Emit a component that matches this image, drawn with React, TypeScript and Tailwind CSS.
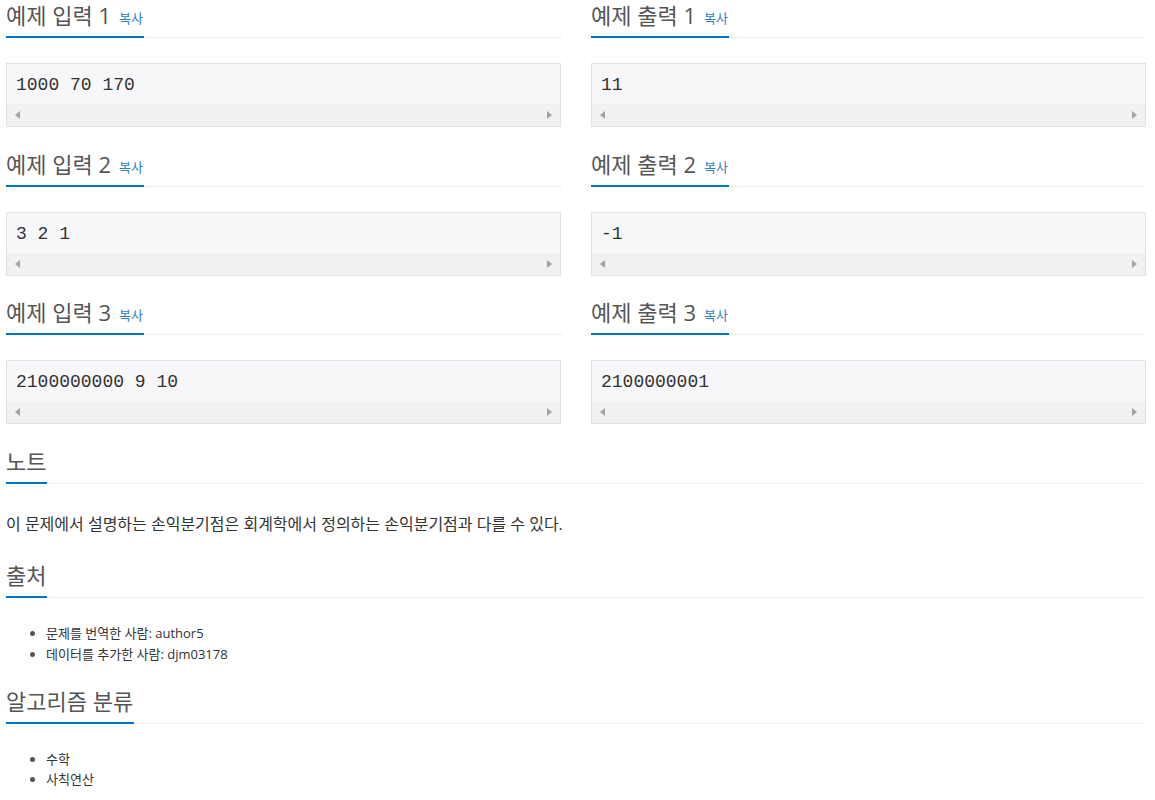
const samples = [
  { n: 1, input: '1000 70 170', output: '11' },
  { n: 2, input: '3 2 1', output: '-1' },
  { n: 3, input: '2100000000 9 10', output: '2100000001' },
]

export default function App() {
  return (
    <div className="w-[1140px] ml-[6px] flex flex-col text-[#333] font-['Open_Sans','Noto_Sans_CJK_KR',sans-serif]">
      <div className="grid grid-cols-2 gap-x-[30px] -mt-[1.5px]">
        {samples.map((s) => (
          <SampleRow key={s.n} n={s.n} input={s.input} output={s.output} />
        ))}
      </div>

      <Headline title="노트" />
      <p className="text-[16px] leading-[30px] mb-[10px]">
        이 문제에서 설명하는 손익분기점은 회계학에서 정의하는 손익분기점과 다를 수 있다.
      </p>

      <Headline title="출처" />
      <ul className="list-disc pl-[40px] mb-[10px] text-[13px] leading-[20.5px] marker:text-[#555]">
        <li>문제를 번역한 사람: author5</li>
        <li>데이터를 추가한 사람: djm03178</li>
      </ul>

      <Headline title="알고리즘 분류" />
      <ul className="list-disc pl-[40px] mb-[10px] text-[13px] leading-[20.5px] marker:text-[#555]">
        <li>수학</li>
        <li>사칙연산</li>
      </ul>
    </div>
  )
}

function SampleRow({ n, input, output }: { n: number; input: string; output: string }) {
  return (
    <>
      <div className="flex flex-col">
        <Headline title={`예제 입력 ${n}`} copy first={n === 1} />
        <Pre text={input} />
      </div>
      <div className="flex flex-col">
        <Headline title={`예제 출력 ${n}`} copy first={n === 1} />
        <Pre text={output} />
      </div>
    </>
  )
}

function Headline({ title, copy, first }: { title: string; copy?: boolean; first?: boolean }) {
  return (
    <div className={`${first ? 'mt-0' : 'mt-[10px]'} mb-[25px] border-b border-dotted border-[#dedede] flex`}>
      <h2 className="-mb-px h-[39.5px] flex items-end gap-[8px] border-b-2 border-[#0076c0] pb-[5px] pr-[1px] text-[#555] font-normal whitespace-nowrap">
        <span className="text-[22px] leading-[32px]">{title}</span>
        {copy && <span className="text-[13px] leading-[26px] text-[#2f7fc1]">복사</span>}
      </h2>
    </div>
  )
}

function Pre({ text }: { text: string }) {
  return (
    <div className="mb-[10px] border border-[#e1e1e8] bg-[#f7f7f9]">
      <div className="px-[9px] pt-[11px] pb-[8px] text-[18px] leading-[21px] text-[#333] font-['Liberation_Mono',monospace] whitespace-pre">
        {text}
      </div>
      <div className="h-[22px] bg-[#f1f1f1] flex items-center justify-between px-[8px]">
        <span className="w-0 h-0 border-y-[4px] border-y-transparent border-r-[5px] border-r-[#a3a3a3]" />
        <span className="w-0 h-0 border-y-[4px] border-y-transparent border-l-[5px] border-l-[#a3a3a3]" />
      </div>
    </div>
  )
}
